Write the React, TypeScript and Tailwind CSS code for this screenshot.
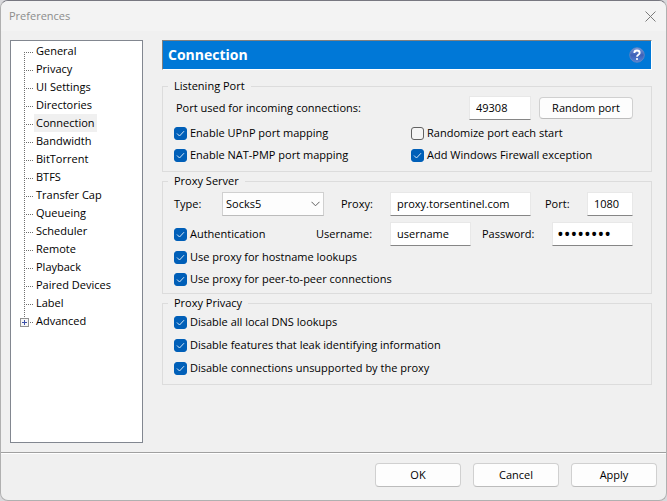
import React, { useState } from 'react';

interface Option {
  id: string;
  label: string;
}

const sections = [
  'General',
  'Privacy',
  'UI Settings',
  'Directories',
  'Connection',
  'Bandwidth',
  'BitTorrent',
  'BTFS',
  'Transfer Cap',
  'Queueing',
  'Scheduler',
  'Remote',
  'Playback',
  'Paired Devices',
  'Label',
  'Advanced',
];

const privacyOptions: Option[] = [
  { id: 'dns', label: 'Disable all local DNS lookups' },
  { id: 'leaks', label: 'Disable features that leak identifying information' },
  { id: 'unsupported', label: 'Disable connections unsupported by the proxy' },
];

const inputClass =
  'h-6 min-w-0 border border-[#e8e8e8] border-b-[#868686] bg-white px-1.5 pb-px outline-none';
const buttonClass =
  'rounded border border-[#d0d0d0] border-b-[#bcbcbc] bg-[#fdfdfd] text-center hover:bg-[#e5f1fb]';

function App() {
  const [active, setActive] = useState('Connection');

  return (
    <div className="min-h-screen bg-[#d9d9dc] font-['Open_Sans','Noto_Sans',sans-serif] text-[11px] leading-4 text-black">
      <div className="flex min-h-screen flex-col overflow-hidden rounded-lg border border-[#b0b0b0] border-t-[#777780] bg-[#f0f0f0]">
        {/* Title bar */}
        <header className="flex h-[30px] items-center justify-between bg-[#f3f3f3] pl-2 pr-2.5">
          <h1 className="text-[#8c8c8c]">Preferences</h1>
          <button type="button" aria-label="Close">
            <svg width="11" height="11" viewBox="0 0 11 11" stroke="#7a7a7a" strokeWidth="1">
              <path d="M.5 .5 10.5 10.5M10.5 .5 .5 10.5" />
            </svg>
          </button>
        </header>

        <div className="flex flex-1 gap-[19px] pb-[9px] pl-[9px] pr-3.5 pt-[9px]">
          {/* Section tree */}
          <nav className="w-[133px] shrink-0 border border-[#828790] bg-white py-px">
            <ul>
              {sections.map((name, i) => (
                <li key={name} className="flex h-[18px] items-center pl-[9px]">
                  <TreeBranch first={i === 0} expandable={i === sections.length - 1} />
                  <button
                    type="button"
                    onClick={() => setActive(name)}
                    className={`h-[18px] whitespace-nowrap px-0.5 ${active === name ? 'bg-[#f0f0f0]' : ''}`}
                  >
                    {name}
                  </button>
                </li>
              ))}
            </ul>
          </nav>

          <main className="min-w-0 flex-1">
            <div className="mb-2 flex h-[30px] items-center justify-between border border-b-white border-l-[#808080] border-r-white border-t-[#808080] bg-[#0078d7] pl-[5px] pr-1.5">
              <h2 className="text-[14px] font-bold leading-5 text-white">Connection</h2>
              <button type="button" aria-label="Help">
                <HelpIcon />
              </button>
            </div>

            <Group title="Listening Port" className="pb-[5px]">
              <div className="flex h-7 items-center pl-0.5">
                <label htmlFor="port" className="mr-auto">Port used for incoming connections:</label>
                <input id="port" defaultValue="49308" className={`${inputClass} w-[62px]`} />
                <button type="button" className={`${buttonClass} ml-2 h-[22px] w-[94px]`}>Random port</button>
              </div>
              <div className="grid grid-cols-[237fr_222fr]">
                <Check id="upnp" label="Enable UPnP port mapping" />
                <Check id="randomize" label="Randomize port each start" checked={false} />
                <Check id="natpmp" label="Enable NAT-PMP port mapping" />
                <Check id="firewall" label="Add Windows Firewall exception" />
              </div>
            </Group>

            <Group title="Proxy Server" className="pb-[3px]">
              <div className="mb-[3px] flex h-[30px] items-center">
                <label htmlFor="type" className="w-12">Type:</label>
                <div className="grid w-[102px] items-center">
                  <select
                    id="type"
                    defaultValue="Socks5"
                    className="col-start-1 row-start-1 h-6 appearance-none border border-[#d0d0d0] border-b-[#bcbcbc] bg-[#fdfdfd] px-[3px] pb-px"
                  >
                    <option>None</option>
                    <option>Socks4</option>
                    <option>Socks5</option>
                    <option>HTTPS</option>
                    <option>HTTP</option>
                  </select>
                  <svg
                    className="pointer-events-none col-start-1 row-start-1 mr-1 justify-self-end"
                    width="9"
                    height="6"
                    viewBox="0 0 9 6"
                    fill="none"
                    stroke="#606060"
                  >
                    <path d="M.5 .8 4.5 4.8 8.5 .8" />
                  </svg>
                </div>
                <label htmlFor="proxy" className="ml-[17px] w-[49px]">Proxy:</label>
                <input id="proxy" defaultValue="proxy.torsentinel.com" className={`${inputClass} flex-1`} />
                <label htmlFor="proxy-port" className="ml-3.5 w-[42px]">Port:</label>
                <input id="proxy-port" defaultValue="1080" className={`${inputClass} w-[46px]`} />
              </div>
              <div className="flex h-6 items-center">
                <div className="w-[142px]">
                  <Check id="auth" label="Authentication" />
                </div>
                <label htmlFor="username" className="w-[74px]">Username:</label>
                <input id="username" defaultValue="username" className={`${inputClass} flex-1`} />
                <label htmlFor="password" className="ml-[11px] w-[70px]">Password:</label>
                <input
                  id="password"
                  type="password"
                  defaultValue="password"
                  className="h-6 w-[81px] border border-[#e8e8e8] border-b-[#868686] bg-white px-1 text-[18px] outline-none"
                />
              </div>
              <Check id="hostname" label="Use proxy for hostname lookups" />
              <Check id="p2p" label="Use proxy for peer-to-peer connections" />
            </Group>

            <Group title="Proxy Privacy" className="pb-[5px]">
              <div className="grid gap-px">
                {privacyOptions.map(option => (
                  <Check key={option.id} id={option.id} label={option.label} />
                ))}
              </div>
            </Group>
          </main>
        </div>

        <footer className="flex h-12 justify-end gap-3 border-t border-[#a0a0a0] pr-[9px] pt-2.5 shadow-[inset_0_1px_0_#fff]">
          {['OK', 'Cancel', 'Apply'].map(name => (
            <button key={name} type="button" className={`${buttonClass} h-6 w-[86px]`}>{name}</button>
          ))}
        </footer>
      </div>
    </div>
  );
}

const Group: React.FC<{
  title: string;
  className: string;
  children: React.ReactNode;
}> = ({ title, className, children }) => (
  <fieldset className={`mb-px min-w-0 border border-[#dcdcdc] pl-[11px] pr-[18px] ${className}`}>
    <legend className="-ml-1.5 px-1.5">{title}</legend>
    {children}
  </fieldset>
);

const Check: React.FC<{
  id: string;
  label: string;
  checked?: boolean;
}> = ({ id, label, checked = true }) => (
  <label htmlFor={id} className="flex h-[22px] items-center gap-[3px] whitespace-nowrap">
    <span className="grid place-items-center">
      <input
        id={id}
        type="checkbox"
        defaultChecked={checked}
        className="peer col-start-1 row-start-1 size-[13px] appearance-none rounded-[3px] border border-[#626262] bg-[#f5f5f5] checked:border-[#005fb8] checked:bg-[#005fb8]"
      />
      <svg
        className="pointer-events-none invisible col-start-1 row-start-1 peer-checked:visible"
        width="9"
        height="7"
        viewBox="0 0 9 7"
        fill="none"
        stroke="#d4e6f6"
      >
        <path d="M1 3.5 3.5 6 8 1.2" />
      </svg>
    </span>
    {label}
  </label>
);

// Dotted connector, with a plus box on nodes that have children
const TreeBranch: React.FC<{ first: boolean; expandable: boolean }> = ({ first, expandable }) => (
  <svg width="14" height="18" viewBox="0 0 14 18" fill="none" shapeRendering="crispEdges">
    <path
      d={first ? 'M4.5 10V18' : expandable ? 'M4.5 0V6' : 'M4.5 0V18'}
      stroke="#707070"
      strokeDasharray="1 1"
    />
    <path d={expandable ? 'M10 10.5H13' : 'M4 10.5H13'} stroke="#707070" strokeDasharray="1 1" />
    {expandable && (
      <>
        <rect x="0.5" y="6.5" width="8" height="8" fill="#f6f6f6" stroke="#919191" />
        <path d="M2 10.5H7M4.5 8V13" stroke="#3c50a8" />
      </>
    )}
  </svg>
);

const HelpIcon = () => (
  <svg width="16" height="16" viewBox="0 0 16 16" fill="none">
    <defs>
      <linearGradient id="help" x1="0" y1="0" x2="0" y2="1">
        <stop offset="0" stopColor="#7f9cdc" />
        <stop offset="0.5" stopColor="#3c60b8" />
        <stop offset="1" stopColor="#5583d6" />
      </linearGradient>
    </defs>
    <circle cx="8" cy="8" r="7.3" fill="url(#help)" stroke="#6a88c0" strokeWidth="0.8" />
    <path d="M5.3 6C5.3 4.2 6.5 3.5 8 3.5S10.7 4.4 10.7 5.9C10.7 7.8 8 7.7 8 9.8" stroke="#fff" strokeWidth="1.8" />
    <circle cx="8" cy="12" r="1.1" fill="#fff" />
  </svg>
);

export default App;
